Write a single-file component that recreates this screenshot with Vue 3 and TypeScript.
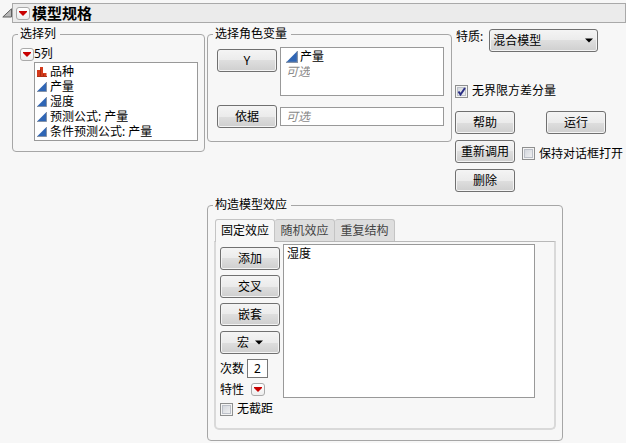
<script setup lang="ts">
import { ref } from 'vue'

interface Column {
  name: string
  kind: 'nominal' | 'continuous'
}

const columns: Column[] = [
  { name: '品种', kind: 'nominal' },
  { name: '产量', kind: 'continuous' },
  { name: '湿度', kind: 'continuous' },
  { name: '预测公式: 产量', kind: 'continuous' },
  { name: '条件预测公式: 产量', kind: 'continuous' },
]
const tabs: string[] = ['固定效应', '随机效应', '重复结构']
const effects: string[] = ['湿度']

const activeTab = ref(0)
const personality = ref('混合模型')
const unbounded = ref(true)
const keepOpen = ref(false)
const noIntercept = ref(false)
const degree = ref('2')
const by = ref('')
</script>

<template>
  <main class="dialog">
    <header class="head">
      <svg class="disclosure" viewBox="0 0 10 10" aria-hidden="true">
        <path d="M0.8 9H9.5V0.8Z" fill="#b8b8b8" stroke="#606060" />
      </svg>
      <div class="bar">
        <button class="hot" type="button" aria-label="模型规格">
          <svg viewBox="0 0 8 5" aria-hidden="true"><path d="M0 0H8V1L4 5L0 1Z" fill="#c80000" /></svg>
        </button>
        <h1>模型规格</h1>
      </div>
    </header>

    <div class="body">
      <fieldset class="pick">
        <legend>选择列</legend>
        <div class="count">
          <button class="hot" type="button" aria-labelledby="count-label">
            <svg viewBox="0 0 8 5" aria-hidden="true"><path d="M0 0H8V1L4 5L0 1Z" fill="#c80000" /></svg>
          </button>
          <span id="count-label">5列</span>
        </div>
        <ul class="list columns">
          <li v-for="c in columns" :key="c.name">
            <svg v-if="c.kind === 'nominal'" class="type" viewBox="0 0 10 10" aria-hidden="true">
              <path d="M0 3H3V0H6V6H7V6H9.5V10H0Z" fill="#d43a1c" />
              <path d="M3.5 2V9M6.5 7V9" stroke="#a82c12" fill="none" />
              <path d="M0 9.5H10" stroke="#b03018" />
            </svg>
            <svg v-else class="type" viewBox="0 0 10 10" aria-hidden="true">
              <path d="M0 9.5L9.5 0V9.5Z" fill="#2f66b5" />
              <path d="M0 9.5H9.5V0" stroke="#8593a8" fill="none" />
            </svg>
            <span>{{ c.name }}</span>
          </li>
        </ul>
      </fieldset>

      <fieldset class="roles">
        <legend>选择角色变量</legend>
        <div class="role-grid">
          <button class="btn y" type="button">Y</button>
          <ul class="list role-list">
            <li>
              <svg class="type large" viewBox="0 0 10 10" aria-hidden="true">
                <path d="M0 9.5L9.5 0V9.5Z" fill="#2f66b5" />
                <path d="M0 9.5H9.5V0" stroke="#8593a8" fill="none" />
              </svg>
              <span>产量</span>
            </li>
            <li class="hint"><span>可选</span></li>
          </ul>
          <button id="by-button" class="btn" type="button">依据</button>
          <input v-model="by" class="field" type="text" placeholder="可选" aria-labelledby="by-button" />
        </div>
      </fieldset>

      <section class="options">
        <div class="personality">
          <label for="personality">特质:</label>
          <span class="select">
            <select id="personality" v-model="personality" class="btn">
              <option>混合模型</option>
            </select>
            <svg viewBox="0 0 8 5" aria-hidden="true"><path d="M0 0.5H8L4 4.5Z" fill="#000" /></svg>
          </span>
        </div>
        <label class="check unbounded">
          <span class="box">
            <input v-model="unbounded" type="checkbox" />
            <svg v-if="unbounded" viewBox="0 0 13 13" aria-hidden="true">
              <path d="M3.5 6.5L5.5 9.5L10 3" fill="none" stroke="#2b2f85" stroke-width="2" />
            </svg>
          </span>
          <span>无界限方差分量</span>
        </label>
        <div class="actions">
          <button class="btn" type="button">帮助</button>
          <button class="btn run" type="button">运行</button>
          <button class="btn" type="button">重新调用</button>
          <label class="check keep">
            <span class="box">
              <input v-model="keepOpen" type="checkbox" />
              <svg v-if="keepOpen" viewBox="0 0 13 13" aria-hidden="true">
                <path d="M3.5 6.5L5.5 9.5L10 3" fill="none" stroke="#2b2f85" stroke-width="2" />
              </svg>
            </span>
            <span>保持对话框打开</span>
          </label>
          <button class="btn" type="button">删除</button>
        </div>
      </section>

      <fieldset class="effects">
        <legend>构造模型效应</legend>
        <div class="tabs" role="tablist">
          <button
            v-for="(t, i) in tabs"
            :key="t"
            type="button"
            role="tab"
            class="tab"
            :class="{ active: i === activeTab }"
            :aria-selected="i === activeTab"
            @click="activeTab = i"
          >{{ t }}</button>
        </div>
        <div class="panel" role="tabpanel">
          <div class="tools">
            <button class="btn" type="button">添加</button>
            <button class="btn" type="button">交叉</button>
            <button class="btn" type="button">嵌套</button>
            <button class="btn macro" type="button">
              宏
              <svg viewBox="0 0 8 5" aria-hidden="true"><path d="M0 0.5H8L4 4.5Z" fill="#000" /></svg>
            </button>
            <div class="degree">
              <label for="degree">次数</label>
              <input id="degree" v-model="degree" type="text" />
            </div>
            <div class="attr">
              <span id="attr-label">特性</span>
              <button class="hot" type="button" aria-labelledby="attr-label">
                <svg viewBox="0 0 8 5" aria-hidden="true"><path d="M0 0H8V1L4 5L0 1Z" fill="#c80000" /></svg>
              </button>
            </div>
            <label class="check">
              <span class="box">
                <input v-model="noIntercept" type="checkbox" />
                <svg v-if="noIntercept" viewBox="0 0 13 13" aria-hidden="true">
                  <path d="M3.5 6.5L5.5 9.5L10 3" fill="none" stroke="#2b2f85" stroke-width="2" />
                </svg>
              </span>
              <span>无截距</span>
            </label>
          </div>
          <ul class="list effect-list">
            <li v-for="e in effects" :key="e"><span>{{ e }}</span></li>
          </ul>
        </div>
      </fieldset>
    </div>
  </main>
</template>

<style>
body {
  background: #f7f7f7;
}
</style>

<style scoped>
.dialog,
.dialog * {
  box-sizing: border-box;
}
.dialog {
  padding-top: 3px;
  font: 12px/16px "Noto Sans", "Noto Sans CJK SC", sans-serif;
  color: #000;
}
button,
input,
select {
  font: inherit;
  color: inherit;
  margin: 0;
}
svg {
  display: block;
  flex: none;
}
.head {
  display: flex;
  align-items: center;
}
.disclosure {
  width: 10px;
  height: 10px;
  margin-left: 2px;
}
.bar {
  flex: 1;
  display: flex;
  align-items: center;
  gap: 2px;
  height: 20px;
  padding-left: 3px;
  background: #ebebeb;
  border: 1px solid #a9a9a9;
}
h1 {
  margin: 0;
  font-size: 15px;
  line-height: 18px;
  font-weight: 700;
}
.hot {
  flex: none;
  display: flex;
  align-items: center;
  justify-content: center;
  width: 14px;
  height: 13px;
  padding: 0;
  border: 1px solid #aaa;
  border-radius: 3px;
  background: linear-gradient(#fff, #eee);
}
.hot svg {
  width: 8px;
  height: 5px;
}
.body {
  display: grid;
  grid-template-columns: 193fr 245fr 172fr;
  gap: 4px 2px;
  align-items: start;
  padding: 3px 0 2px 12px;
}
fieldset {
  min-width: 0;
  margin: 0;
  border: 1px solid #a6a6a6;
  border-radius: 4px;
}
legend {
  height: 16px;
  margin: 0;
  padding: 0 4px 0 2px;
}
.pick {
  padding: 4px 6px 10px 7px;
}
.pick legend {
  margin-left: -2px;
}
.count {
  display: flex;
  align-items: center;
  height: 16px;
}
.list {
  margin: 0;
  padding: 1px;
  list-style: none;
  background: #fff;
  border: 1px solid #999;
  line-height: 15px;
}
.list li {
  display: flex;
  align-items: center;
  height: 15px;
  white-space: nowrap;
}
.list span {
  height: 15px;
  overflow: hidden;
}
.columns {
  margin-left: 14px;
}
.columns li {
  gap: 3px;
  padding-left: 1px;
}
.type {
  width: 10px;
  height: 10px;
}
.large {
  width: 12px;
  height: 12px;
}
.roles {
  padding: 5px 7px 13px 9px;
}
.roles legend {
  margin-left: -4px;
}
.role-grid {
  display: grid;
  grid-template-columns: 60px 1fr;
  gap: 9px 3px;
  align-items: center;
}
.btn {
  display: flex;
  align-items: center;
  justify-content: center;
  width: 60px;
  height: 23px;
  padding: 0;
  border: 1px solid #707070;
  border-radius: 3px;
  background: linear-gradient(#f4f4f4, #ebebeb 50%, #dedede 50%, #cfcfcf);
  box-shadow: inset 0 0 0 1px #f4f4f4;
  white-space: nowrap;
}
.y {
  align-self: start;
  margin-top: 2px;
}
.role-list {
  height: 49px;
}
.role-list li {
  gap: 2px;
  padding-left: 4px;
}
.hint,
.field::placeholder {
  color: #8a8a8a;
  font-style: italic;
  opacity: 1;
}
.field {
  width: 100%;
  min-width: 0;
  height: 19px;
  padding: 0 5px;
  border: 1px solid #999;
  border-radius: 0;
  background: #fff;
}
.options {
  padding: 3px 0 1px 1px;
}
.personality {
  display: flex;
  align-items: flex-start;
  gap: 6px;
  padding-left: 1px;
  white-space: nowrap;
}
.select {
  display: grid;
  align-items: center;
  width: 109px;
}
.select > * {
  grid-area: 1 / 1;
}
.select select {
  appearance: none;
  width: 100%;
  padding: 0 20px 0 3px;
}
.select svg {
  justify-self: end;
  width: 8px;
  height: 5px;
  margin-right: 5px;
  pointer-events: none;
}
.check {
  display: flex;
  align-items: center;
  gap: 4px;
  height: 16px;
  white-space: nowrap;
}
.box {
  flex: none;
  display: grid;
  width: 13px;
  height: 13px;
}
.box > * {
  grid-area: 1 / 1;
}
.box svg {
  pointer-events: none;
}
.box input {
  appearance: none;
  width: 13px;
  height: 13px;
  border: 1px solid #8e8f8f;
  outline: 1px solid #bcc0c8;
  outline-offset: -3px;
  background: linear-gradient(135deg, #cdd1d8, #f6f6f6);
  box-shadow: inset 0 0 0 1px #f4f4f4;
}
.unbounded {
  margin: 31px 0 12px;
}
.actions {
  display: grid;
  grid-template-columns: 60px auto;
  justify-content: start;
  align-items: center;
  gap: 6px 7px;
}
.run {
  margin-left: 24px;
}
.keep {
  margin-top: 4px;
}
.effects {
  grid-column: 2 / 4;
  margin-right: 63px;
  padding: 6px 6px 10px;
}
.effects legend {
  margin-left: -1px;
}
.tabs {
  display: flex;
  padding-left: 1px;
}
.tab {
  width: 60px;
  height: 22px;
  padding: 0;
  border: 1px solid #c4c4c4;
  border-bottom: 0;
  border-left-width: 0;
  border-radius: 3px 3px 0 0;
  background: #dedede;
  color: #444;
  white-space: nowrap;
}
.tab:first-child {
  border-left-width: 1px;
}
.tab.active {
  height: 23px;
  margin-bottom: -1px;
  background: #f7f7f7;
  color: #000;
  z-index: 1;
}
.panel {
  display: flex;
  align-items: flex-start;
  gap: 3px;
  padding: 2px 19px 11px 4px;
  border: 2px solid #d9d9d9;
  border-top: 1px solid #b8b8b8;
  border-radius: 0 0 5px 5px;
}
.tools {
  flex: none;
  display: flex;
  flex-direction: column;
  gap: 5px;
  width: 60px;
  padding-top: 3px;
}
.macro {
  gap: 6px;
}
.macro svg {
  width: 8px;
  height: 5px;
}
.degree,
.attr {
  display: flex;
  align-items: center;
  white-space: nowrap;
}
.degree {
  gap: 3px;
  height: 19px;
}
.degree input {
  width: 21px;
  height: 19px;
  padding: 0;
  border: 1px solid #777;
  background: #fff;
  text-align: center;
}
.attr {
  gap: 7px;
  height: 13px;
}
.effect-list {
  flex: 1;
  min-width: 0;
  height: 154px;
}
.effect-list li {
  padding-left: 2px;
}
</style>
